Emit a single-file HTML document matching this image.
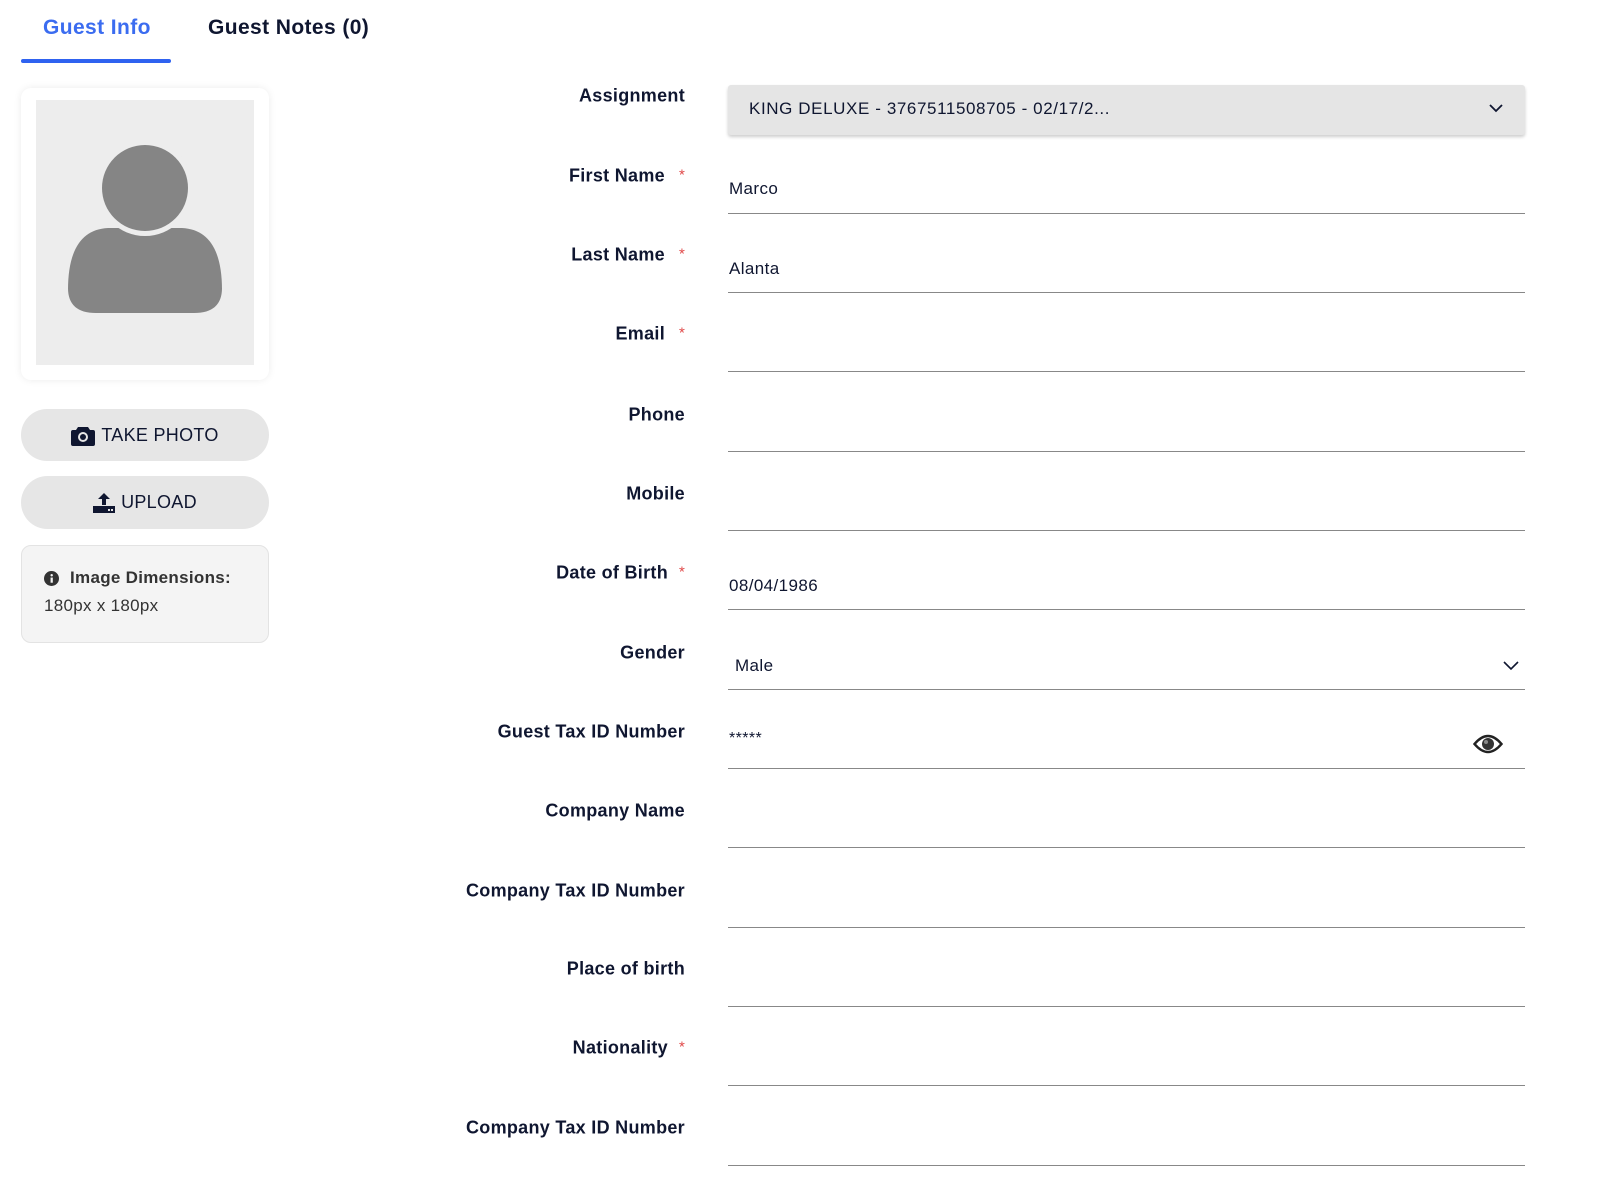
<!DOCTYPE html>
<html><head><meta charset="utf-8"><style>
*{box-sizing:border-box;margin:0;padding:0}
body{width:1600px;height:1189px;background:#fff;font-family:"Liberation Sans",sans-serif;color:#0f1630;position:relative;overflow:hidden}
.abs{position:absolute}
.tab{position:absolute;top:16px;font-size:21px;font-weight:bold;white-space:nowrap;letter-spacing:0.4px}
.lbl{position:absolute;right:915px;font-size:18px;letter-spacing:0.3px;font-weight:bold;white-space:nowrap;transform:translateY(-50%)}
.req{position:absolute;left:679px;color:#e04848;font-size:15px;transform:translateY(-55%)}
.line{position:absolute;left:728px;width:797px;height:1px;background:#888}
.val{position:absolute;left:729px;font-size:17px;letter-spacing:0.4px;transform:translateY(-50%);white-space:nowrap}
.btn{position:absolute;left:21px;width:248px;border-radius:27px;background:#e6e6e6;display:flex;align-items:center;justify-content:center;font-size:18px;letter-spacing:0.3px;gap:6px;color:#0f1630}
</style></head><body>
<div class="tab" style="left:43px;color:#3b6cf0">Guest Info</div>
<div class="tab" style="left:208px">Guest Notes (0)</div>
<div class="abs" style="left:21px;top:59px;width:150px;height:4px;background:#2f62f0;border-radius:2px"></div>

<div class="abs" style="left:21px;top:88px;width:248px;height:292px;border-radius:10px;background:#fff;box-shadow:0 0 8px rgba(0,0,0,.08)"></div>
<div class="abs" style="left:36px;top:100px;width:218px;height:265px;background:#ededed">
<svg width="218" height="265" viewBox="0 0 218 265"><path d="M32 190 Q32 130 72 128 L146 128 Q186 130 186 190 L186 188 Q186 213 158 213 L60 213 Q32 213 32 188 Z" fill="#858585"/><circle cx="109" cy="88" r="48" fill="#ededed"/><circle cx="109" cy="88" r="43" fill="#858585"/></svg>
</div>

<div class="btn" style="top:409px;height:52px"><svg width="24" height="21" viewBox="0 0 24 21"><path d="M7 2h10l2 3h3a2 2 0 0 1 2 2v12a2 2 0 0 1-2 2H2a2 2 0 0 1-2-2V7a2 2 0 0 1 2-2h3z" fill="#0f1630"/><circle cx="12" cy="12" r="5" fill="#e6e6e6"/><circle cx="12" cy="12" r="3" fill="#0f1630"/></svg>TAKE PHOTO</div>
<div class="btn" style="top:476px;height:53px"><svg width="22" height="20" viewBox="0 0 22 20"><path d="M11 0l6 6h-4v6H9V6H5z" fill="#0f1630"/><rect x="0" y="13" width="22" height="7" fill="#0f1630"/><rect x="15" y="16" width="2" height="2" fill="#e6e6e6"/><rect x="18" y="16" width="2" height="2" fill="#e6e6e6"/></svg>UPLOAD</div>
<div class="abs" style="left:21px;top:545px;width:248px;height:98px;border-radius:10px;background:#f4f4f4;border:1px solid #e3e3e3;padding:22px 0 0 22px;font-size:17px;letter-spacing:0.3px;color:#333">
<div style="font-weight:bold;display:flex;align-items:center;gap:11px"><svg width="15" height="15" viewBox="0 0 16 16"><circle cx="8" cy="8" r="8" fill="#333"/><rect x="7" y="7" width="2.4" height="5.5" fill="#f4f4f4"/><circle cx="8.2" cy="4.5" r="1.3" fill="#f4f4f4"/></svg>Image Dimensions:</div>
<div style="margin-top:8px">180px x 180px</div></div>

<div class="lbl" style="top:96px">Assignment</div>
<div class="abs" style="left:728px;top:85px;width:797px;height:50px;background:#e5e5e5;border-radius:3px;box-shadow:0 2px 3px rgba(0,0,0,.2);font-size:17px;letter-spacing:0.6px;padding:14px 0 0 21px">KING DELUXE - 3767511508705 - 02/17/2...
<svg class="abs" style="right:22px;top:19px" width="14" height="9" viewBox="0 0 14 9"><path d="M1 1l6 6 6-6" fill="none" stroke="#0f1630" stroke-width="1.8"/></svg></div>

<div class="lbl" style="top:176px;right:935px">First Name</div><div class="req" style="top:176px">*</div>
<div class="val" style="top:189px">Marco</div><div class="line" style="top:213px"></div>

<div class="lbl" style="top:255px;right:935px">Last Name</div><div class="req" style="top:255px">*</div>
<div class="val" style="top:269px">Alanta</div><div class="line" style="top:292px"></div>

<div class="lbl" style="top:334px;right:935px">Email</div><div class="req" style="top:334px">*</div>
<div class="line" style="top:371px"></div>

<div class="lbl" style="top:415px">Phone</div>
<div class="line" style="top:451px"></div>

<div class="lbl" style="top:494px">Mobile</div>
<div class="line" style="top:530px"></div>

<div class="lbl" style="top:573px;right:932px">Date of Birth</div><div class="req" style="top:573px">*</div>
<div class="val" style="top:586px">08/04/1986</div><div class="line" style="top:609px"></div>

<div class="lbl" style="top:653px">Gender</div>
<div class="val" style="top:666px;left:735px">Male</div>
<svg class="abs" style="left:1503px;top:661px" width="16" height="10" viewBox="0 0 16 10"><path d="M1 1l7 7 7-7" fill="none" stroke="#0f1630" stroke-width="1.6"/></svg>
<div class="line" style="top:689px"></div>

<div class="lbl" style="top:732px">Guest Tax ID Number</div>
<div class="val" style="top:739px;font-size:16px">*****</div>
<svg class="abs" style="left:1473px;top:734px" width="30" height="20" viewBox="0 0 30 20"><path d="M1.5 10Q15-6 28.5 10Q15 26 1.5 10Z" fill="none" stroke="#222" stroke-width="2.5"/><circle cx="15" cy="10" r="6" fill="#333"/><circle cx="13" cy="8" r="2" fill="#888"/></svg>
<div class="line" style="top:768px"></div>

<div class="lbl" style="top:811px">Company Name</div>
<div class="line" style="top:847px"></div>

<div class="lbl" style="top:891px">Company Tax ID Number</div>
<div class="line" style="top:927px"></div>

<div class="lbl" style="top:969px">Place of birth</div>
<div class="line" style="top:1006px"></div>

<div class="lbl" style="top:1048px;right:932px">Nationality</div><div class="req" style="top:1048px">*</div>
<div class="line" style="top:1085px"></div>

<div class="lbl" style="top:1128px">Company Tax ID Number</div>
<div class="line" style="top:1165px"></div>
</body></html>
